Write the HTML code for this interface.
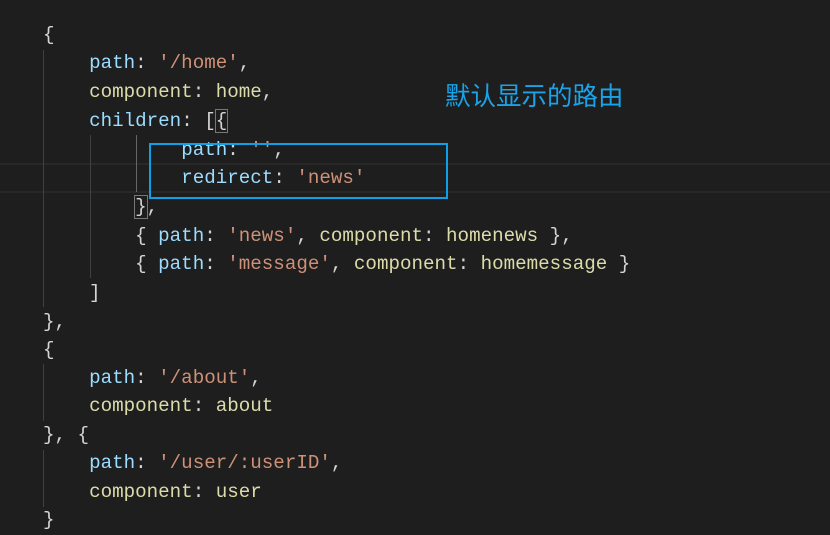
<!DOCTYPE html>
<html><head><meta charset="utf-8"><style>
body{margin:0;width:830px;height:530px;background:#1e1e1e;overflow:hidden;position:relative;font-family:"Liberation Mono",monospace;font-size:19.2px;}
.l{position:absolute;left:43px;height:28.7px;line-height:28.7px;white-space:pre;color:#d4d4d4}
.k{color:#9cdcfe}.s{color:#ce9178}.v{color:#dcdcaa}
.g{position:absolute;width:1px;background:#404040}
</style></head><body>
<div style="position:absolute;left:0;top:163px;width:830px;height:26px;border-top:2px solid #282828;border-bottom:2px solid #282828"></div>
<div class="g" style="left:43px;top:50px;height:257px"></div>
<div class="g" style="left:90px;top:135px;height:143px"></div>
<div class="g" style="left:136px;top:135px;height:57px;background:#666"></div>
<div class="g" style="left:43px;top:364px;height:57px"></div>
<div class="g" style="left:43px;top:450px;height:57px"></div>
<div class="l" style="top:21px">{</div>
<div class="l" style="top:49px">    <span class="k">path</span>: <span class="s">'/home'</span>,</div>
<div class="l" style="top:78px">    <span class="v">component</span>: <span class="v">home</span>,</div>
<div class="l" style="top:107px">    <span class="k">children</span>: [<span style="outline:1px solid #777">{</span></div>
<div class="l" style="top:136px">            <span class="k">path</span>: <span class="s">''</span>,</div>
<div class="l" style="top:164px">            <span class="k">redirect</span>: <span class="s">'news'</span></div>
<div class="l" style="top:193px">        <span style="outline:1px solid #777">}</span>,</div>
<div class="l" style="top:222px">        { <span class="k">path</span>: <span class="s">'news'</span>, <span class="v">component</span>: <span class="v">homenews</span> },</div>
<div class="l" style="top:250px">        { <span class="k">path</span>: <span class="s">'message'</span>, <span class="v">component</span>: <span class="v">homemessage</span> }</div>
<div class="l" style="top:279px">    ]</div>
<div class="l" style="top:308px">},</div>
<div class="l" style="top:336px">{</div>
<div class="l" style="top:364px">    <span class="k">path</span>: <span class="s">'/about'</span>,</div>
<div class="l" style="top:392px">    <span class="v">component</span>: <span class="v">about</span></div>
<div class="l" style="top:421px">}, {</div>
<div class="l" style="top:449px">    <span class="k">path</span>: <span class="s">'/user/:userID'</span>,</div>
<div class="l" style="top:478px">    <span class="v">component</span>: <span class="v">user</span></div>
<div class="l" style="top:506px">}</div>
<div style="position:absolute;left:149px;top:143px;width:295px;height:52px;border:2px solid #0ea0e6"></div>
<div style="position:absolute;left:445px;top:81px;font-family:'Liberation Sans','Noto Sans CJK SC',sans-serif;font-size:25.5px;color:#1aa3e8;line-height:32px;white-space:nowrap">默认显示的路由</div>
</body></html>
